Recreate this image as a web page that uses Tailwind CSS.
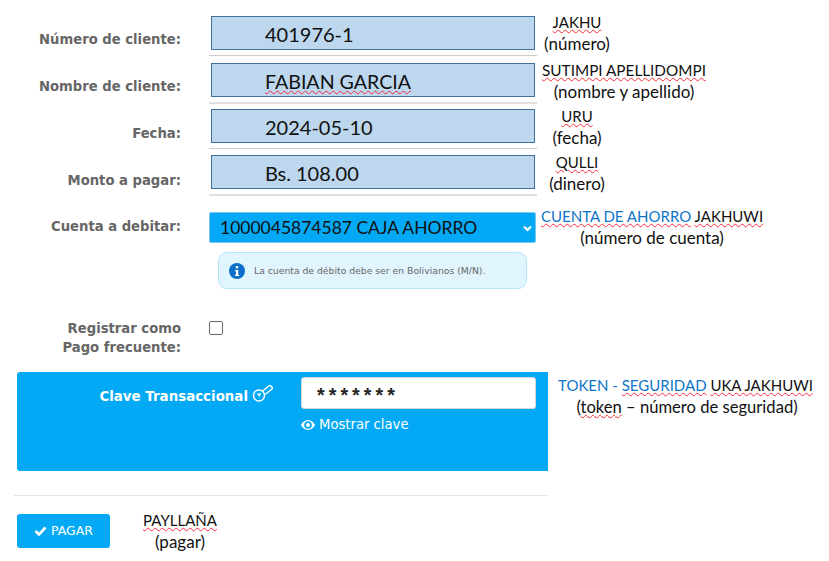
<!DOCTYPE html>
<html lang="en">
<head>
  <meta charset="UTF-8">
  <title>Pago de servicios</title>
  <script src="https://cdn.jsdelivr.net/npm/@tailwindcss/browser@4"></script>
</head>
<body class="bg-white">
  <div class="w-[829px] h-[561px] overflow-hidden pt-[16px] font-['Lato',sans-serif] text-[17px] leading-[22px] text-[#111]">

    <!-- Datos del pago -->
    <div class="flex h-[47px]">
      <div class="w-[181px] pt-[16px] text-right font-['DejaVu_Sans',sans-serif] text-[13.2px] leading-[16px] font-bold text-[#666]">Número de cliente:</div>
      <div class="ml-[28px] w-[328px]">
        <div class="mx-[2px] h-[34px] border border-[#41719c] bg-[#bdd7ee] pl-[53px] text-[20px] leading-[35px]">401976-1</div>
        <div class="mt-[5px] h-[1px] bg-[#ccc]"></div>
      </div>
      <div class="-mt-[5px] w-[80px] text-center">
        <div class="text-[15px]"><span class="underline decoration-wavy decoration-red-500 decoration-1">JAKHU</span></div>
        <div>(número)</div>
      </div>
    </div>

    <div class="flex h-[46px]">
      <div class="w-[181px] pt-[16px] text-right font-['DejaVu_Sans',sans-serif] text-[13.2px] leading-[16px] font-bold text-[#666]">Nombre de cliente:</div>
      <div class="ml-[28px] w-[328px]">
        <div class="mx-[2px] h-[34px] border border-[#41719c] bg-[#bdd7ee] pl-[53px] text-[19.6px] leading-[35px]"><span class="underline decoration-wavy decoration-red-500 decoration-1">FABIAN GARCIA</span></div>
        <div class="mt-[5px] h-[2px] bg-[#e0e0e0]"></div>
      </div>
      <div class="-mt-[4px] ml-[4px] w-[166px] text-center">
        <div class="whitespace-nowrap text-[15.3px]"><span class="underline decoration-wavy decoration-red-500 decoration-1">SUTIMPI APELLIDOMPI</span></div>
        <div class="whitespace-nowrap">(nombre y apellido)</div>
      </div>
    </div>

    <div class="flex h-[46px]">
      <div class="w-[181px] pt-[17px] text-right font-['DejaVu_Sans',sans-serif] text-[13.2px] leading-[16px] font-bold text-[#666]">Fecha:</div>
      <div class="ml-[28px] w-[328px]">
        <div class="mx-[2px] h-[34px] border border-[#41719c] bg-[#bdd7ee] pl-[53px] text-[20px] leading-[35px]">2024-05-10</div>
        <div class="mt-[5px] h-[1px] bg-[#ccc]"></div>
      </div>
      <div class="-mt-[4px] w-[80px] text-center">
        <div class="text-[15px]"><span class="underline decoration-wavy decoration-red-500 decoration-1">URU</span></div>
        <div>(fecha)</div>
      </div>
    </div>

    <div class="flex h-[57px]">
      <div class="w-[181px] pt-[18px] text-right font-['DejaVu_Sans',sans-serif] text-[13.2px] leading-[16px] font-bold text-[#666]">Monto a pagar:</div>
      <div class="ml-[28px] w-[328px]">
        <div class="mx-[2px] h-[34px] border border-[#41719c] bg-[#bdd7ee] pl-[53px] text-[20px] leading-[35px]">Bs. 108.00</div>
        <div class="mt-[5px] h-[2px] bg-[#e0e0e0]"></div>
      </div>
      <div class="-mt-[4px] w-[80px] text-center">
        <div class="text-[15px]"><span class="underline decoration-wavy decoration-red-500 decoration-1">QULLI</span></div>
        <div>(dinero)</div>
      </div>
    </div>

    <!-- Cuenta -->
    <div class="flex h-[109px]">
      <div class="w-[181px] pt-[7px] text-right font-['DejaVu_Sans',sans-serif] text-[13.2px] leading-[16px] font-bold text-[#666]">Cuenta a debitar:</div>
      <div class="ml-[28px] w-[327px]">
        <div class="relative">
          <select class="block h-[31px] w-full appearance-none rounded-[2px] border border-[#7cc6ee] bg-[#04a9f5] pl-[10px] font-['Lato',sans-serif] text-[17.5px] leading-[28px] text-[#111]">
            <option>1000045874587 CAJA AHORRO</option>
          </select>
          <svg class="absolute right-[3px] top-[12px] h-[9px] w-[11px]" viewBox="0 0 11 9" fill="none" stroke="#fff" stroke-width="2"><path d="M2 2.5l3.5 3.5 3.500-3.500"/></svg>
        </div>
        <div class="mx-[9px] mt-[9px] flex h-[37px] w-[309px] items-center rounded-[9px] border border-[#b3e5fc] bg-[#e1f5fe] pl-[10px]">
          <svg class="h-[16px] w-[16px] shrink-0" viewBox="0 0 16 16"><circle cx="8" cy="8" r="8" fill="#0b6fc9"/><rect x="6.800" y="3" width="2.400" height="2.400" fill="#fff"/><path d="M6 7h3.200v4.800h1V13H6v-1.200h1V8.200H6z" fill="#fff"/></svg>
          <span class="ml-[9px] font-['DejaVu_Sans',sans-serif] text-[9.25px] leading-[12px] text-[#666]">La cuenta de débito debe ser en Bolivianos (M/N).</span>
        </div>
      </div>
      <div class="-mt-[7px] ml-[5px] w-[222px] text-center">
        <div class="whitespace-nowrap text-[15px]"><span class="text-[#0f75c9] underline decoration-wavy decoration-red-500 decoration-1">CUENTA DE AHORRO</span> <span class="underline decoration-wavy decoration-red-500 decoration-1">JAKHUWI</span></div>
        <div>(número de cuenta)</div>
      </div>
    </div>

    <div class="flex h-[51px]">
      <div class="-mt-[2px] w-[181px] text-right font-['DejaVu_Sans',sans-serif] text-[13.2px] leading-[19px] font-bold text-[#666]">Registrar como<br>Pago frecuente:</div>
      <input type="checkbox" class="ml-[28px] h-[14px] w-[14px] appearance-none rounded-[2px] border border-[#666] bg-white">
    </div>

    <!-- Clave -->
    <div class="flex h-[123px] items-start">
      <div class="ml-[17px] flex h-[99px] w-[531px] rounded-l-[3px] bg-[#04a9f5] pt-[5px]">
        <div class="flex w-[284px] justify-end">
          <span class="mt-[12px] whitespace-nowrap font-['DejaVu_Sans',sans-serif] text-[13.4px] leading-[16px] font-bold text-white">Clave Transaccional</span>
          <svg class="ml-[4px] mr-[28px] mt-[6px] h-[20px] w-[21px]" viewBox="0 0 21 20" fill="none" stroke="#fff" stroke-width="1.400"><circle cx="7" cy="12.500" r="5.500"/><path d="M10.500 8.200L17 2.800a1.500 1.500 0 0 1 2 .2l1 1.300a1.500 1.500 0 0 1-.2 2l-6.500 5"/><path d="M5 10.500h4.200l-2 3.500z" fill="#fff" stroke="none"/></svg>
        </div>
        <div class="w-[235px]">
          <div class="h-[32px] rounded-[3px] border border-[#d8d8d8] bg-white pl-[13px] font-['Liberation_Mono',monospace] text-[19.5px] leading-[40px] font-bold text-[#222]">*******</div>
          <div class="mt-[8px] flex items-center font-['DejaVu_Sans',sans-serif] text-[13.2px] leading-[16px] text-white">
            <svg class="mr-[4px] h-[10px] w-[14px]" viewBox="0 0 14 10"><path fill="#fff" fill-rule="evenodd" d="M7 0C3.800 0 1.300 2.200 0 5c1.300 2.800 3.800 5 7 5s5.700-2.200 7-5c-1.300-2.800-3.800-5-7-5zm0 1.200A3.800 3.800 0 1 1 7 8.800 3.800 3.800 0 0 1 7 1.200zM7 3a2 2 0 1 0 0 4 2 2 0 0 0 0-4z"/></svg>
            Mostrar clave
          </div>
        </div>
      </div>
      <div class="ml-[10px] mt-[2px] w-[254px] text-center">
        <div class="whitespace-nowrap text-[15px]"><span class="text-[#0f75c9]">TOKEN - <span class="underline decoration-wavy decoration-red-500 decoration-1">SEGURIDAD</span></span> <span class="underline decoration-wavy decoration-red-500 decoration-1">UKA JAKHUWI</span></div>
        <div class="whitespace-nowrap pl-[4px] text-[16.6px]">(<span class="underline decoration-wavy decoration-red-500 decoration-1">token</span> – número de seguridad)</div>
      </div>
    </div>

    <div class="ml-[14px] h-[1px] w-[534px] bg-[#e5e5e5]"></div>

    <!-- Pagar -->
    <div class="mt-[18px] flex items-start pl-[17px]">
      <button class="flex h-[34px] w-[93px] items-center justify-center rounded-[3px] bg-[#04a9f5] font-['DejaVu_Sans',sans-serif] text-[12.5px] text-white">
        <svg class="mr-[4px] h-[10px] w-[13px]" viewBox="0 0 13 10" fill="none" stroke="#fff" stroke-width="2.600"><path d="M1.500 5l3.500 3.500 6.500-7"/></svg>
        PAGAR
      </button>
      <div class="-mt-[5px] ml-[25px] w-[90px] text-center">
        <div class="text-[15px]"><span class="underline decoration-wavy decoration-red-500 decoration-1">PAYLLAÑA</span></div>
        <div>(pagar)</div>
      </div>
    </div>
  </div>
</body>
</html>
